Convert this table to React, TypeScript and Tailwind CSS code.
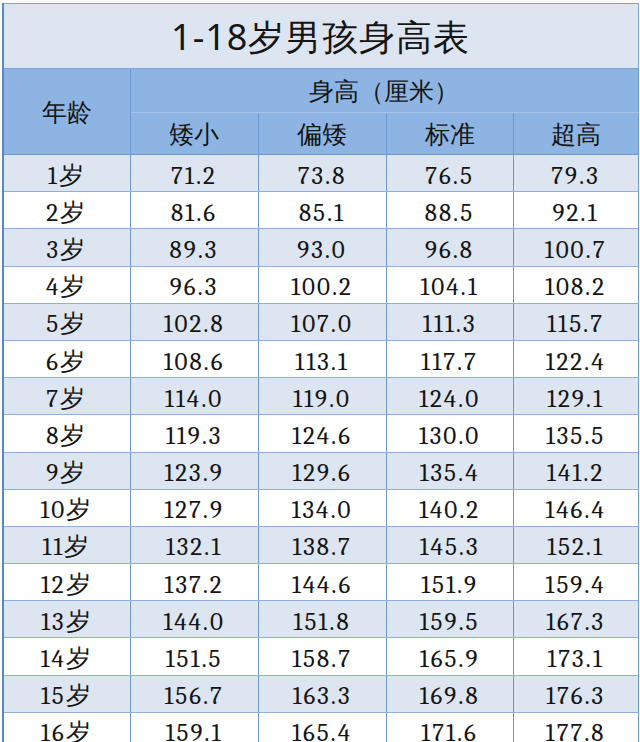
const rows: [string, string, string, string, string][] = [
  ['1岁', '71.2', '73.8', '76.5', '79.3'],
  ['2岁', '81.6', '85.1', '88.5', '92.1'],
  ['3岁', '89.3', '93.0', '96.8', '100.7'],
  ['4岁', '96.3', '100.2', '104.1', '108.2'],
  ['5岁', '102.8', '107.0', '111.3', '115.7'],
  ['6岁', '108.6', '113.1', '117.7', '122.4'],
  ['7岁', '114.0', '119.0', '124.0', '129.1'],
  ['8岁', '119.3', '124.6', '130.0', '135.5'],
  ['9岁', '123.9', '129.6', '135.4', '141.2'],
  ['10岁', '127.9', '134.0', '140.2', '146.4'],
  ['11岁', '132.1', '138.7', '145.3', '152.1'],
  ['12岁', '137.2', '144.6', '151.9', '159.4'],
  ['13岁', '144.0', '151.8', '159.5', '167.3'],
  ['14岁', '151.5', '158.7', '165.9', '173.1'],
  ['15岁', '156.7', '163.3', '169.8', '176.3'],
  ['16岁', '159.1', '165.4', '171.6', '177.8'],
];

export default function App() {
  return (
    <div className="h-[742px] w-[640px] overflow-hidden bg-white pl-[2px] pt-[3px]">
      <table className="w-[635px] table-fixed border-collapse border-l-2 border-l-[#5b87c4] text-[#151515]">
        <colgroup>
          <col className="w-[127px]" />
          <col className="w-[128px]" />
          <col className="w-[128px]" />
          <col className="w-[127px]" />
          <col className="w-[125px]" />
        </colgroup>
        <thead className="font-sans">
          <tr className="h-[65px]">
            <th
              colSpan={5}
              className="border border-[#7fa3d6] bg-[#dde5f1] pt-[2px] text-[36px] font-normal tracking-[1px]"
            >
              1-18岁男孩身高表
            </th>
          </tr>
          <tr className="h-[44px]">
            <th
              rowSpan={2}
              className="border border-[#6f98d0] bg-[#8db4e2] text-[25px] font-normal"
            >
              年龄
            </th>
            <th
              colSpan={4}
              className="border border-[#6f98d0] border-b-[#a7c4ea] bg-[#8db4e2] text-[25px] font-normal"
            >
              身高（厘米）
            </th>
          </tr>
          <tr className="h-[42px]">
            {['矮小', '偏矮', '标准', '超高'].map((h) => (
              <th
                key={h}
                className="border border-[#6f98d0] bg-[#8db4e2] text-[25px] font-normal"
              >
                {h}
              </th>
            ))}
          </tr>
        </thead>
        <tbody className="font-serif">
          {rows.map((r, i) => (
            <tr key={r[0]} className={`h-[37.2px] ${i % 2 === 0 ? 'bg-[#dde5f1]' : 'bg-white'}`}>
              {r.map((c, j) => (
                <td
                  key={j}
                  className="border border-x-[#6f98d0] border-y-[#8fb0dc] pt-[4px] text-center text-[25px] leading-none tracking-[2px]"
                >
                  {c}
                </td>
              ))}
            </tr>
          ))}
        </tbody>
      </table>
    </div>
  );
}
